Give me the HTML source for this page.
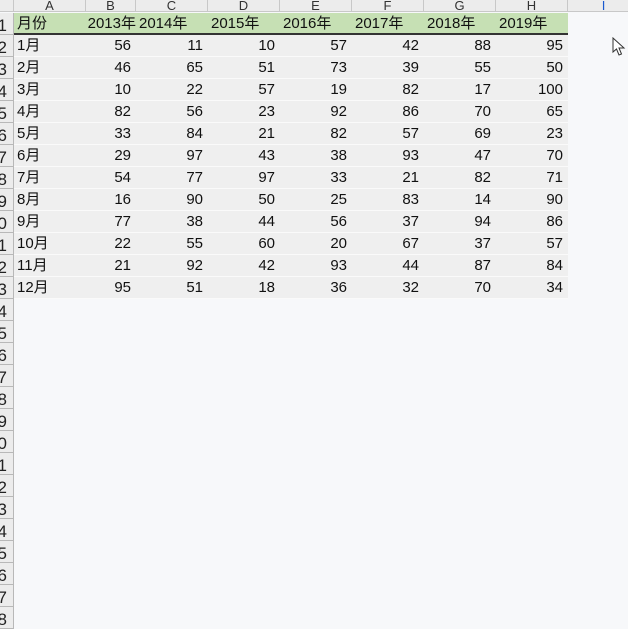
<!DOCTYPE html><html><head><meta charset="utf-8"><style>
body{margin:0;width:628px;height:627px;overflow:hidden;background:#f7f8fa;font-family:"Liberation Sans","Noto Sans CJK SC",sans-serif;position:relative}
.ch{position:absolute;top:0;height:12px;border-right:1px solid #c8c8c8;border-bottom:1px solid #c8c8c8;background:#ececec;font-size:13px;line-height:12px;text-align:center;color:#333;box-sizing:border-box}
.rh{position:absolute;left:0;width:14px;height:22px;border-bottom:1px solid #b8b8b8;border-right:1px solid #b8b8b8;background:#ececec;box-sizing:border-box;font-size:17px;line-height:26px;overflow:hidden;color:#222}
.rh span{position:absolute;right:6px;white-space:nowrap}
.row{position:absolute;left:14px;width:554px;height:22px;font-size:15px;line-height:22px;color:#111}
.row div{position:absolute;top:0;height:22px;white-space:nowrap}
.hdr{background:#c6e0b4;border-bottom:2px solid #333;box-sizing:border-box}
.dat{background:#efefef;border-bottom:1px solid #fafafa;box-sizing:border-box}
</style></head><body>
<div class="ch" style="left:0;width:14px"></div>
<div class="ch" style="left:14px;width:72px">A</div>
<div class="ch" style="left:86px;width:50px">B</div>
<div class="ch" style="left:136px;width:72px">C</div>
<div class="ch" style="left:208px;width:72px">D</div>
<div class="ch" style="left:280px;width:72px">E</div>
<div class="ch" style="left:352px;width:72px">F</div>
<div class="ch" style="left:424px;width:72px">G</div>
<div class="ch" style="left:496px;width:72px">H</div>
<div class="ch" style="left:568px;width:72px;color:#1a5ad0">I</div>
<div id="rows"></div>
<svg style="position:absolute;left:612px;top:37px" width="14" height="20" viewBox="0 0 14 20"><path d="M1 1 L1 15 L4.5 12 L7 18 L9.5 17 L7 11 L12 11 Z" fill="#fff" stroke="#333" stroke-width="1"/></svg>
<script>
var d=[["月份","2013年","2014年","2015年","2016年","2017年","2018年","2019年"],
["1月",56,11,10,57,42,88,95],["2月",46,65,51,73,39,55,50],["3月",10,22,57,19,82,17,100],["4月",82,56,23,92,86,70,65],["5月",33,84,21,82,57,69,23],["6月",29,97,43,38,93,47,70],["7月",54,77,97,33,21,82,71],["8月",16,90,50,25,83,14,90],["9月",77,38,44,56,37,94,86],["10月",22,55,60,20,67,37,57],["11月",21,92,42,93,44,87,84],["12月",95,51,18,36,32,70,34]];
var L=[0,72,122,194,266,338,410,482,554],h="";
for(var r=1;r<=28;r++){var t=13+(r-1)*22;h+='<div class="rh" style="top:'+t+'px"><span>'+r+'</span></div>';}
for(var i=0;i<13;i++){var t=13+i*22;h+='<div class="row '+(i?'dat':'hdr')+'" style="top:'+t+'px">';
for(var c=0;c<8;c++){var s=d[i][c];if(c==0)h+='<div style="left:3px">'+s+'</div>';else if(i==0){if(c==1)h+='<div style="left:'+L[c]+'px;width:50px;text-align:right">'+s+'</div>';else h+='<div style="left:'+(L[c]+3)+'px">'+s+'</div>';}else h+='<div style="left:'+L[c]+'px;width:'+(L[c+1]-L[c]-5)+'px;text-align:right">'+s+'</div>';}
h+='</div>';}
document.getElementById('rows').innerHTML=h;
</script>
</body></html>
